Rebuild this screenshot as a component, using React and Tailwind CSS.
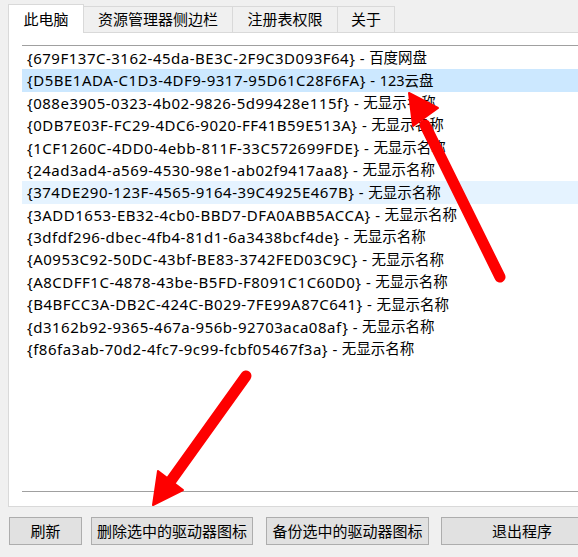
import React from 'react';

const font = { fontFamily: '"Noto Sans", "Noto Sans CJK SC", sans-serif' };

const tabs = [
  { label: '此电脑', w: 'w-[76px]', active: true },
  { label: '资源管理器侧边栏', w: 'w-[149px]' },
  { label: '注册表权限', w: 'w-[105px]' },
  { label: '关于', w: 'w-[57px]' },
];

const drives = [
  ['{679F137C-3162-45da-BE3C-2F9C3D093F64}', '百度网盘'],
  ['{D5BE1ADA-C1D3-4DF9-9317-95D61C28F6FA}', '123云盘', 'selected'],
  ['{088e3905-0323-4b02-9826-5d99428e115f}', '无显示名称'],
  ['{0DB7E03F-FC29-4DC6-9020-FF41B59E513A}', '无显示名称'],
  ['{1CF1260C-4DD0-4ebb-811F-33C572699FDE}', '无显示名称'],
  ['{24ad3ad4-a569-4530-98e1-ab02f9417aa8}', '无显示名称'],
  ['{374DE290-123F-4565-9164-39C4925E467B}', '无显示名称', 'hover'],
  ['{3ADD1653-EB32-4cb0-BBD7-DFA0ABB5ACCA}', '无显示名称'],
  ['{3dfdf296-dbec-4fb4-81d1-6a3438bcf4de}', '无显示名称'],
  ['{A0953C92-50DC-43bf-BE83-3742FED03C9C}', '无显示名称'],
  ['{A8CDFF1C-4878-43be-B5FD-F8091C1C60D0}', '无显示名称'],
  ['{B4BFCC3A-DB2C-424C-B029-7FE99A87C641}', '无显示名称'],
  ['{d3162b92-9365-467a-956b-92703aca08af}', '无显示名称'],
  ['{f86fa3ab-70d2-4fc7-9c99-fcbf05467f3a}', '无显示名称'],
];

const buttons = [
  { label: '刷新', w: 'w-[73px]', ml: 'ml-[9px]' },
  { label: '删除选中的驱动器图标', w: 'w-[162px]', ml: 'ml-[9px]' },
  { label: '备份选中的驱动器图标', w: 'w-[163px]', ml: 'ml-[13px]' },
  { label: '退出程序', w: 'w-[162px]', ml: 'ml-[12px]' },
];

const Arrows = () => (
  <svg className="absolute inset-0 pointer-events-none" width="578" height="557" viewBox="0 0 578 557">
    <g fill="#fe0000" stroke="#fe0000" strokeLinecap="round" strokeLinejoin="round">
      <line x1="500" y1="277" x2="425" y2="125" strokeWidth="11" />
      <polygon points="409,93 413,126 438,108" strokeWidth="2" />
      <line x1="246" y1="376" x2="170" y2="482" strokeWidth="11" />
      <polygon points="153,505 158,471 183,490" strokeWidth="2" />
    </g>
  </svg>
);

export default function App() {
  return (
    <div className="relative w-[578px] h-[557px] overflow-hidden bg-[#f0f0f0] pt-[4px] text-[15px] text-black" style={font}>
      <div className="flex items-end pl-[8px] h-[28px]">
        {tabs.map((t) => (
          <div
            key={t.label}
            className={`${t.w} flex items-center justify-center border-t border-r border-[#d9d9d9] ${
              t.active ? 'h-[29px] bg-white border-l -mb-px relative z-10' : 'h-[26px] bg-[#f0f0f0]'
            }`}
          >
            {t.label}
          </div>
        ))}
      </div>

      <div className="ml-[8px] h-[475px] bg-white border border-r-0 border-[#d9d9d9] pl-[13px] pt-[12px]">
        <div className="h-[447px] border-t border-b border-[#a0a0a0] pt-[1px]">
          {drives.map(([id, name, state]) => (
            <div
              key={id}
              className={`h-[22.4px] flex items-center pl-[5px] whitespace-nowrap ${
                state === 'selected' ? 'bg-[#cce8ff]' : state === 'hover' ? 'bg-[#e5f3ff]' : ''
              }`}
            >
              <span className="tracking-[0.5px]">{id} - </span>
              <span className="ml-[4px] text-[14.5px]">{name}</span>
            </div>
          ))}
        </div>
      </div>

      <div className="flex mt-[10px]">
        {buttons.map((b) => (
          <div
            key={b.label}
            className={`${b.w} ${b.ml} shrink-0 h-[28px] flex items-center justify-center bg-[#e1e1e1] border border-[#adadad]`}
          >
            {b.label}
          </div>
        ))}
      </div>

      <Arrows />
    </div>
  );
}
